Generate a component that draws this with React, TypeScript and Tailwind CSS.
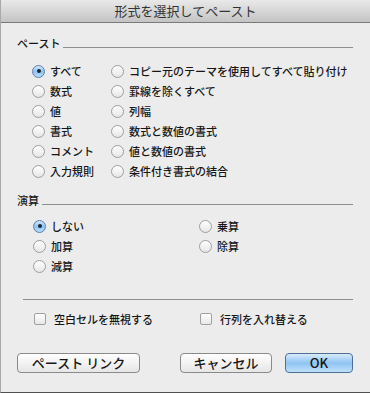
import React from "react";

const font = "font-['Noto_Sans_CJK_JP','Liberation_Sans',sans-serif]";

function Radio({ checked }: { checked?: boolean }) {
  if (checked) {
    return (
      <span className="w-[13px] h-[13px] shrink-0 rounded-full border border-[#5d7fa8] bg-linear-to-b from-[#d3e8fc] via-[#8fc3f3] to-[#b7dbfa] flex items-center justify-center">
        <span className="w-[4px] h-[4px] rounded-full bg-[#1b2633]" />
      </span>
    );
  }
  return (
    <span className="w-[13px] h-[13px] shrink-0 rounded-full border border-[#9e9e9e] bg-linear-to-b from-[#ffffff] to-[#e6e6e6]" />
  );
}

function Option({ label, checked }: { label: string; checked?: boolean }) {
  return (
    <div className="h-[20px] flex items-center gap-[5px] whitespace-nowrap">
      <Radio checked={checked} />
      <span>{label}</span>
    </div>
  );
}

function Check({ label }: { label: string }) {
  return (
    <div className="h-[20px] flex items-center gap-[8px] whitespace-nowrap">
      <span className="w-[12px] h-[12px] shrink-0 rounded-[2px] border border-[#a0a0a0] bg-linear-to-b from-[#ffffff] to-[#e8e8e8]" />
      <span>{label}</span>
    </div>
  );
}

function Heading({ label }: { label: string }) {
  return (
    <div className="flex items-center h-[16px]">
      <span>{label}</span>
      <div className="flex-1 h-px bg-[#8e8e8e] mt-[8px] ml-[3px]" />
    </div>
  );
}

export default function App() {
  return (
    <div
      className={`w-[370px] h-[393px] bg-[#ececec] flex flex-col border-l border-l-[#a9a9a9] border-b border-b-[#505050] text-[11px] font-medium text-[#161616] ${font}`}
    >
      <div className="h-[23px] shrink-0 border-b border-[#7a7a7a] bg-linear-to-b from-[#e9e9e9] to-[#c4c4c4] flex items-center justify-center text-[13px] font-normal text-[#333333]">
        形式を選択してペースト
      </div>
      <div className="pl-[16px] pr-[17px] pt-[12px] flex flex-col">
        <Heading label="ペースト" />
        <div className="mt-[10px] pl-[15px] grid grid-cols-[79px_auto]">
          <Option label="すべて" checked />
          <Option label="コピー元のテーマを使用してすべて貼り付け" />
          <Option label="数式" />
          <Option label="罫線を除くすべて" />
          <Option label="値" />
          <Option label="列幅" />
          <Option label="書式" />
          <Option label="数式と数値の書式" />
          <Option label="コメント" />
          <Option label="値と数値の書式" />
          <Option label="入力規則" />
          <Option label="条件付き書式の結合" />
        </div>
        <div className="mt-[11px]">
          <Heading label="演算" />
        </div>
        <div className="mt-[8px] pl-[16px] grid grid-cols-[166px_auto]">
          <Option label="しない" checked />
          <Option label="乗算" />
          <Option label="加算" />
          <Option label="除算" />
          <Option label="減算" />
        </div>
        <div className="mt-[23px] ml-[6px] h-px bg-[#8e8e8e]" />
        <div className="mt-[9px] pl-[17px] grid grid-cols-[166px_auto]">
          <Check label="空白セルを無視する" />
          <Check label="行列を入れ替える" />
        </div>
        <div className="mt-[24px] flex items-center text-[13px]">
          <button className="w-[123px] h-[20px] rounded-[4px] border border-[#8a8a8a] bg-linear-to-b from-[#ffffff] to-[#e6e6e6] flex items-center justify-center">
            ペースト リンク
          </button>
          <button className="ml-[40px] w-[92px] h-[20px] rounded-[4px] border border-[#8a8a8a] bg-linear-to-b from-[#ffffff] to-[#e6e6e6] flex items-center justify-center">
            キャンセル
          </button>
          <button className="ml-[13px] w-[68px] h-[20px] rounded-[4px] border border-[#4f6f98] bg-linear-to-b from-[#d9ebfc] via-[#8ec4f3] to-[#c0e0fb] flex items-center justify-center">
            OK
          </button>
        </div>
      </div>
    </div>
  );
}
